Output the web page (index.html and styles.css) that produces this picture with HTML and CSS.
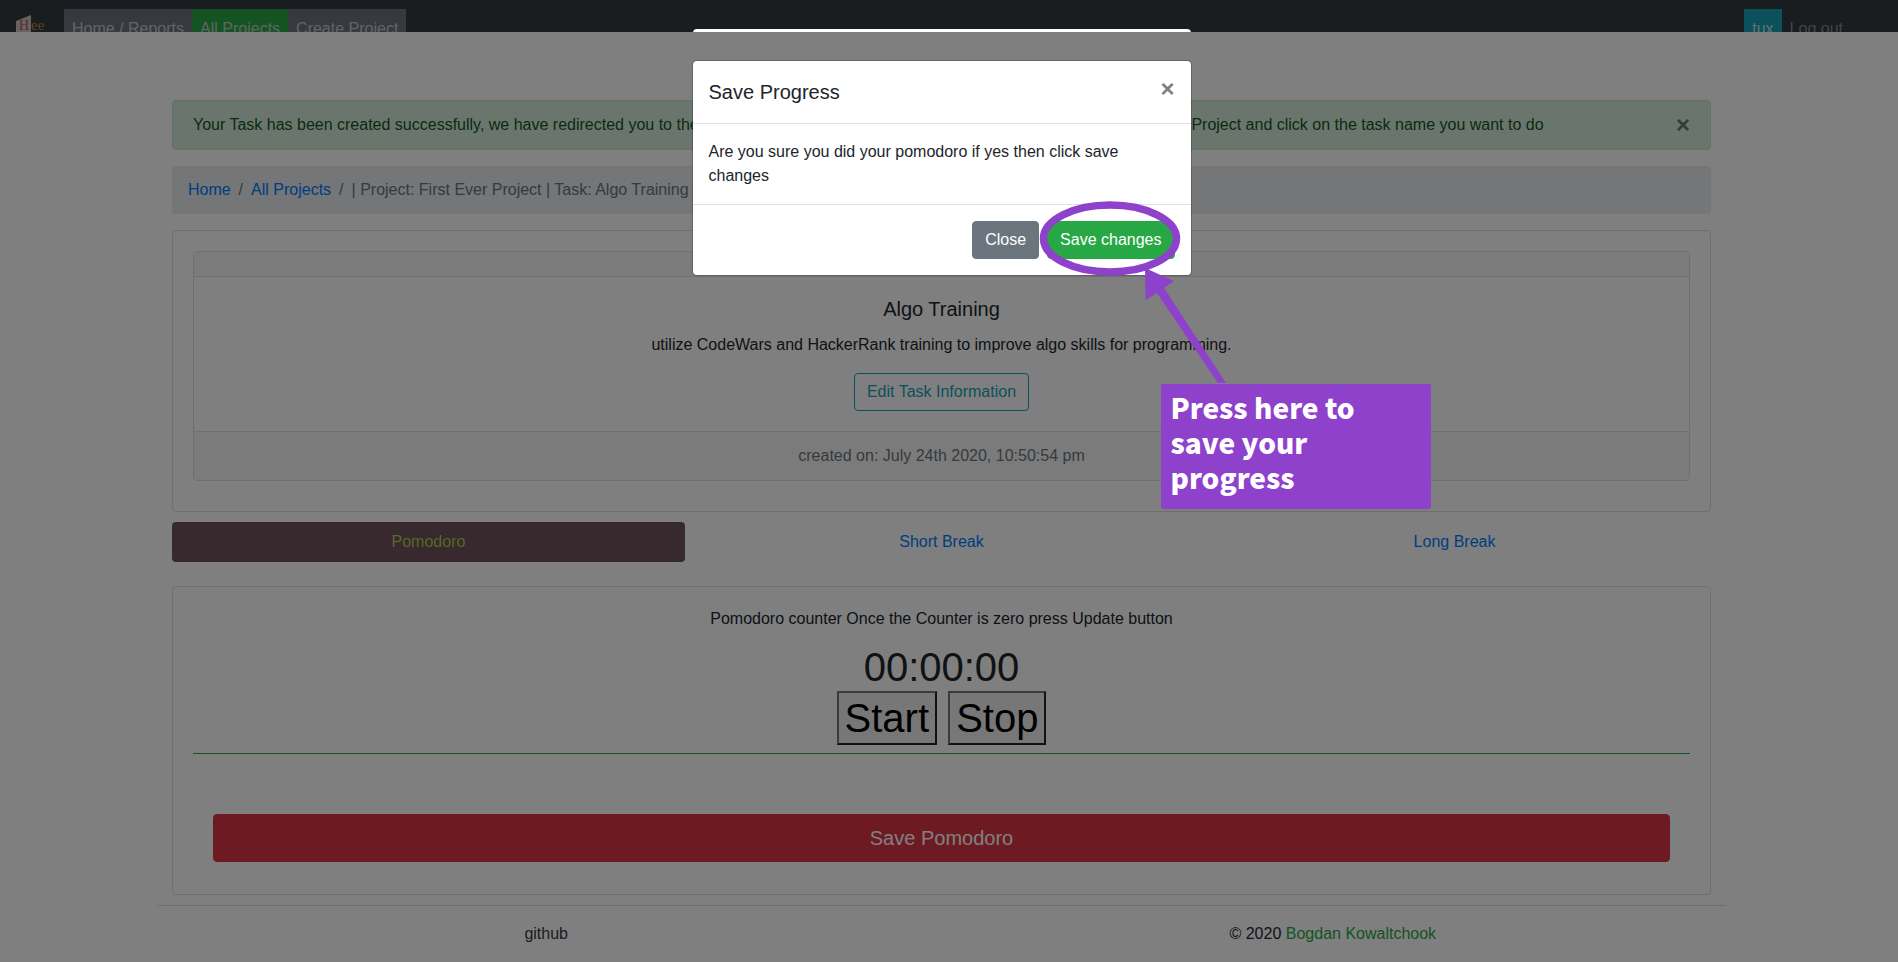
FILE: index.html
```html
<!DOCTYPE html>
<html lang="en">
<head>
<meta charset="utf-8">
<title>Task: Algo Training</title>
<link rel="stylesheet" href="styles.css">
</head>
<body>
<header class="topbar">
  <a class="brand" href="#" aria-label="Hee">
    <svg width="32" height="28" viewBox="0 0 32 28">
      <path d="M0 6L15 0V28H0Z" fill="#c8c8c8"/>
      <text x="3" y="15" font-size="14" fill="#d04848">H</text>
      <text x="15" y="15" font-size="15" fill="#b9853c">ee</text>
    </svg>
  </a>
  <nav class="nav">
    <a class="nav-link" href="#">Home / Reports</a>
    <a class="nav-link active" href="#">All Projects</a>
    <a class="nav-link" href="#">Create Project</a>
  </nav>
  <nav class="nav nav-user">
    <a class="nav-link user" href="#">tux</a>
    <a class="nav-link logout" href="#">Log out</a>
  </nav>
</header>

<div class="page">
  <main class="container">
    <div class="alert" role="alert">
      <span>Your Task has been created successfully, we have redirected you to the All Projects page, to start the first pomodoro timer please select your Project and click on the task name you want to do</span>
      <button class="close" type="button" aria-label="Dismiss">×</button>
    </div>
    <ol class="breadcrumb">
      <li><a href="#">Home</a></li>
      <li><a href="#">All Projects</a></li>
      <li>| Project: First Ever Project | Task: Algo Training</li>
    </ol>
    <section class="card task-panel">
      <article class="card task">
        <div class="task-header"></div>
        <div class="task-body">
          <h1 class="task-title">Algo Training</h1>
          <p class="task-text">utilize CodeWars and HackerRank training to improve algo skills for programming.</p>
          <button class="btn btn-outline" type="button">Edit Task Information</button>
        </div>
        <div class="task-footer">created on: July 24th 2020, 10:50:54 pm</div>
      </article>
    </section>
    <nav class="pills">
      <a class="pill selected" href="#">Pomodoro</a>
      <a class="pill" href="#">Short Break</a>
      <a class="pill" href="#">Long Break</a>
    </nav>
    <section class="card timer-panel">
      <p class="timer-text">Pomodoro counter Once the Counter is zero press Update button</p>
      <div class="timer">
        <div>00:00:00</div>
        <button class="timer-btn" type="button">Start</button>
        <button class="timer-btn" type="button">Stop</button>
      </div>
      <div class="save-row">
        <button class="btn btn-danger" type="button">Save Pomodoro</button>
      </div>
    </section>
  </main>
  <footer class="footer">
    <div class="footer-col footer-link"><a href="#">github</a></div>
    <div class="footer-col">© 2020 <a class="author" href="#">Bogdan Kowaltchook</a></div>
  </footer>
</div>

<div class="backdrop"></div>
<div class="modal-peek"><div class="peek-sheet"></div></div>
<div class="modal">
  <div class="dialog" role="dialog" aria-labelledby="dialog-title">
    <div class="dialog-header">
      <h2 class="dialog-title" id="dialog-title">Save Progress</h2>
      <button class="close" type="button" aria-label="Close dialog">×</button>
    </div>
    <div class="dialog-body">Are you sure you did your pomodoro if yes then click save changes</div>
    <div class="dialog-footer">
      <button class="btn btn-secondary" type="button">Close</button>
      <button class="btn btn-success" type="button">Save changes</button>
    </div>
    <svg class="callout-arrow" width="160" height="190" viewBox="0 0 160 190" aria-hidden="true">
      <ellipse cx="78" cy="39.500" rx="66.500" ry="33.500" fill="none" stroke="#8e41cb" stroke-width="7.5"/>
      <path d="M113 69L142 82L132 89L194 184L186 184L125 94L113.500 101Z" fill="#8e41cb"/>
    </svg>
    <div class="callout">Press here to save your progress</div>
  </div>
</div>
</body>
</html>
```
FILE: styles.css
```css
* { box-sizing: border-box; }

body {
  margin: 0;
  min-height: 100vh;
  position: relative;
  display: flex;
  flex-direction: column;
  background: #fff;
  color: #212529;
  font: 16px/24px "Liberation Sans", Arial, sans-serif;
}

a { color: #007bff; text-decoration: none; }
h1, h2, p, ol { margin: 0; padding: 0; font-weight: 400; }
button { font: inherit; }

.topbar {
  display: flex;
  align-items: flex-start;
  height: 32px;
  padding: 9px 47px 0 16px;
  overflow: hidden;
  background: #343a40;
}
.brand { width: 48px; padding-top: 6px; font-family: "Liberation Serif", serif; }
.brand svg { display: block; }
.nav { display: flex; }
.nav-user { margin-left: auto; }
.nav-link { padding: 8px; background: #6c757d; color: #c4c8cb; }
.nav-link.active { background: #28a745; }
.nav-link.user { background: #17a2b8; color: #d0e0e4; }
.nav-link.logout { background: none; color: #84888c; }

.page { flex: 1; padding: 68px 15px 0 0; }
.container, .footer { width: 83.333%; margin: 0 auto; }
.container { padding: 0 15px; }

.alert {
  display: flex;
  justify-content: space-between;
  padding: 12px 20px;
  border: 1px solid #c3e6cb;
  border-radius: 4px;
  background: #d4edda;
  color: #155724;
}
.close {
  padding: 0;
  border: 0;
  background: none;
  color: #000;
  font-size: 24px;
  font-weight: 700;
  line-height: 24px;
  opacity: .5;
}

.breadcrumb {
  display: flex;
  margin: 16px 0;
  padding: 12px 16px;
  border-radius: 4px;
  background: #e9ecef;
  color: #6c757d;
  list-style: none;
}
.breadcrumb li + li::before { content: "/"; padding: 0 8px; }

.card { border: 1px solid #dfdfdf; border-radius: 4px; text-align: center; }
.task-panel { padding: 20px 20px 30px; }
.task-header { height: 25px; border-bottom: 1px solid #dfdfdf; background: #f7f7f7; }
.task-body { padding: 20px; }
.task-title { margin-bottom: 12px; font-size: 20px; }
.task-text { margin-bottom: 16px; }
.task-footer {
  padding: 12px 20px;
  border-top: 1px solid #dfdfdf;
  background: #f7f7f7;
  color: #6c757d;
}

.btn { padding: 6px 12px; border: 1px solid; border-radius: 4px; }
.btn-outline { border-color: #17a2b8; background: none; color: #17a2b8; }
.btn-secondary { border-color: #6c757d; background: #6c757d; color: #fff; }
.btn-success { border-color: #28a745; background: #28a745; color: #fff; }
.btn-danger {
  width: 100%;
  padding: 8px 16px;
  border-color: #dc3545;
  background: #dc3545;
  color: #fff;
  font-size: 20px;
  line-height: 30px;
}

.pills { display: flex; margin: 10px 0 24px; }
.pill { flex: 1; padding: 8px 16px; border-radius: 4px; text-align: center; }
.pill.selected { background: #6e525a; color: #b0cc50; }

.timer-panel { padding: 20px 20px 32px; }
.timer-text { margin-bottom: 12px; }
.timer {
  padding-bottom: 8px;
  border-bottom: 1px solid #28a745;
  font-size: 40px;
  line-height: 48px;
}
.timer-btn {
  padding: 1px 6px;
  border: 2px solid;
  border-color: #767676 #212529 #212529 #767676;
  background: #efefef;
  color: #000;
  vertical-align: top;
}
.save-row { padding: 60px 20px 0; }

.footer { display: flex; margin-top: 10px; padding: 16px 0; border-top: 1px solid #dfdfdf; }
.footer-col { flex: 1; padding-right: 4px; text-align: center; }
.footer-link { padding-right: 8px; }
.footer-link a { color: #343a40; }
.footer .author { color: #28a745; }

.backdrop { position: absolute; inset: 0; background: rgba(0, 0, 0, .5); }

.modal-peek, .modal { position: absolute; left: 0; right: 15px; }
.modal-peek { top: 29px; height: 3px; overflow: hidden; }
.peek-sheet { width: 498px; height: 24px; margin: 0 auto; border-radius: 4px; background: #fff; }
.modal { top: 60px; }
.dialog {
  position: relative;
  width: 500px;
  margin: 0 auto;
  border: 1px solid rgba(0, 0, 0, .2);
  border-radius: 5px;
  background: #fff;
  background-clip: padding-box;
}
.dialog-header, .dialog-footer { display: flex; padding: 16px; }
.dialog-header {
  align-items: flex-start;
  justify-content: space-between;
  border-bottom: 1px solid #dee2e6;
}
.dialog-title { font-size: 20px; line-height: 30px; }
.dialog-body { padding: 16px; }
.dialog-footer { justify-content: flex-end; gap: 8px; border-top: 1px solid #dee2e6; }

.callout-arrow { position: absolute; top: 138px; left: 339px; overflow: visible; }
.callout {
  position: absolute;
  top: 323px;
  left: 468px;
  width: 270px;
  padding: 6px 50px 14px 10px;
  border-radius: 2px;
  background: #8e41cb;
  color: #fff;
  font: 900 28px/35px "Noto Sans CJK SC", sans-serif;
}
```
